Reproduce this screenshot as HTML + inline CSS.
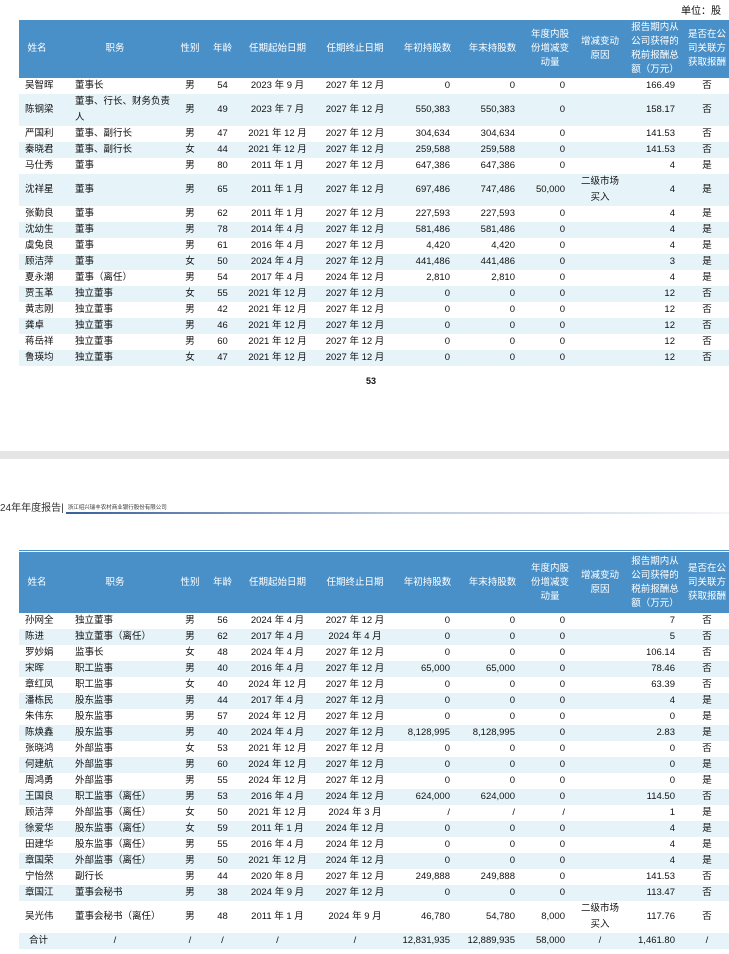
<!DOCTYPE html>
<html><head><meta charset="utf-8">
<style>
body{margin:0;width:729px;height:954px;background:#fff;overflow:hidden;position:relative;font-family:"Liberation Sans","Noto Sans CJK SC",sans-serif;color:#111;}
table{position:absolute;left:19px;width:710px;border-collapse:collapse;table-layout:fixed;font-size:9.5px;}
td,th{padding:0 3px;height:16px;line-height:14px;white-space:nowrap;}
th{background:#4a90c8;color:#fff;font-weight:normal;line-height:14px;white-space:normal;text-align:center;padding:0 2px;}
tr:nth-child(odd) td{background:#e6f3f8;}
tr:nth-child(even) td{background:#fff;}
td:nth-child(1){text-align:left;padding-left:6px}
td:nth-child(2){text-align:left;padding-left:20px}
td:nth-child(3),td:nth-child(4),td:nth-child(5),td:nth-child(6),td:nth-child(10),td:nth-child(12){text-align:center}
td:nth-child(7),td:nth-child(8),td:nth-child(9),td:nth-child(11){text-align:right;padding-right:10px}
td.w{white-space:normal;line-height:16px}
.unit{position:absolute;right:8px;top:2px;font-size:10px}
.pn{position:absolute;left:366px;top:376px;font-size:9px;font-weight:bold}
.band{position:absolute;left:0;top:451px;width:729px;height:8px;background:#e5e5e5}
.hd{position:absolute;left:0;top:502px;font-size:10px;line-height:12px;color:#333;white-space:nowrap}
.hd small{font-size:5.5px;margin-left:4px;vertical-align:2px}
.line{position:absolute;left:66px;top:512px;width:663px;height:2px;background:linear-gradient(to right,#3a5f9a,#b8c6dc,#f4f6fa)}
.tl{position:absolute;left:19px;top:550px;width:710px;height:1px;background:#4a90c8}
</style></head><body>
<div class="unit">单位：股</div>
<table style="top:20px">
<colgroup><col style="width:36px"><col style="width:120px"><col style="width:30px"><col style="width:35px"><col style="width:75px"><col style="width:80px"><col style="width:65px"><col style="width:65px"><col style="width:50px"><col style="width:50px"><col style="width:60px"><col style="width:44px"></colgroup>
<tr><th style="height:58px">姓名</th><th>职务</th><th>性别</th><th>年龄</th><th>任期起始日期</th><th>任期终止日期</th><th>年初持股数</th><th>年末持股数</th><th>年度内股份增减变动量</th><th>增减变动原因</th><th>报告期内从公司获得的税前报酬总额（万元）</th><th>是否在公司关联方获取报酬</th></tr>
<tr><td>吴智晖</td><td>董事长</td><td>男</td><td>54</td><td>2023 年 9 月</td><td>2027 年 12 月</td><td>0</td><td>0</td><td>0</td><td></td><td>166.49</td><td>否</td></tr>
<tr><td style="height:32px">陈钢梁</td><td class="w">董事、行长、财务负责人</td><td>男</td><td>49</td><td>2023 年 7 月</td><td>2027 年 12 月</td><td>550,383</td><td>550,383</td><td>0</td><td></td><td>158.17</td><td>否</td></tr>
<tr><td>严国利</td><td>董事、副行长</td><td>男</td><td>47</td><td>2021 年 12 月</td><td>2027 年 12 月</td><td>304,634</td><td>304,634</td><td>0</td><td></td><td>141.53</td><td>否</td></tr>
<tr><td>秦晓君</td><td>董事、副行长</td><td>女</td><td>44</td><td>2021 年 12 月</td><td>2027 年 12 月</td><td>259,588</td><td>259,588</td><td>0</td><td></td><td>141.53</td><td>否</td></tr>
<tr><td>马仕秀</td><td>董事</td><td>男</td><td>80</td><td>2011 年 1 月</td><td>2027 年 12 月</td><td>647,386</td><td>647,386</td><td>0</td><td></td><td>4</td><td>是</td></tr>
<tr><td style="height:32px">沈祥星</td><td>董事</td><td>男</td><td>65</td><td>2011 年 1 月</td><td>2027 年 12 月</td><td>697,486</td><td>747,486</td><td>50,000</td><td class="w">二级市场买入</td><td>4</td><td>是</td></tr>
<tr><td>张勤良</td><td>董事</td><td>男</td><td>62</td><td>2011 年 1 月</td><td>2027 年 12 月</td><td>227,593</td><td>227,593</td><td>0</td><td></td><td>4</td><td>是</td></tr>
<tr><td>沈幼生</td><td>董事</td><td>男</td><td>78</td><td>2014 年 4 月</td><td>2027 年 12 月</td><td>581,486</td><td>581,486</td><td>0</td><td></td><td>4</td><td>是</td></tr>
<tr><td>虞兔良</td><td>董事</td><td>男</td><td>61</td><td>2016 年 4 月</td><td>2027 年 12 月</td><td>4,420</td><td>4,420</td><td>0</td><td></td><td>4</td><td>是</td></tr>
<tr><td>顾洁萍</td><td>董事</td><td>女</td><td>50</td><td>2024 年 4 月</td><td>2027 年 12 月</td><td>441,486</td><td>441,486</td><td>0</td><td></td><td>3</td><td>是</td></tr>
<tr><td>夏永潮</td><td>董事（离任）</td><td>男</td><td>54</td><td>2017 年 4 月</td><td>2024 年 12 月</td><td>2,810</td><td>2,810</td><td>0</td><td></td><td>4</td><td>是</td></tr>
<tr><td>贾玉革</td><td>独立董事</td><td>女</td><td>55</td><td>2021 年 12 月</td><td>2027 年 12 月</td><td>0</td><td>0</td><td>0</td><td></td><td>12</td><td>否</td></tr>
<tr><td>黄志刚</td><td>独立董事</td><td>男</td><td>42</td><td>2021 年 12 月</td><td>2027 年 12 月</td><td>0</td><td>0</td><td>0</td><td></td><td>12</td><td>否</td></tr>
<tr><td>龚卓</td><td>独立董事</td><td>男</td><td>46</td><td>2021 年 12 月</td><td>2027 年 12 月</td><td>0</td><td>0</td><td>0</td><td></td><td>12</td><td>否</td></tr>
<tr><td>蒋岳祥</td><td>独立董事</td><td>男</td><td>60</td><td>2021 年 12 月</td><td>2027 年 12 月</td><td>0</td><td>0</td><td>0</td><td></td><td>12</td><td>否</td></tr>
<tr><td>鲁瑛均</td><td>独立董事</td><td>女</td><td>47</td><td>2021 年 12 月</td><td>2027 年 12 月</td><td>0</td><td>0</td><td>0</td><td></td><td>12</td><td>否</td></tr>
</table>
<div class="pn">53</div>
<div class="band"></div>
<div class="hd">24年年度报告|<small>浙江绍兴瑞丰农村商业银行股份有限公司</small></div>
<div class="line"></div>
<div class="tl"></div>
<table style="top:552px">
<colgroup><col style="width:36px"><col style="width:120px"><col style="width:30px"><col style="width:35px"><col style="width:75px"><col style="width:80px"><col style="width:65px"><col style="width:65px"><col style="width:50px"><col style="width:50px"><col style="width:60px"><col style="width:44px"></colgroup>
<tr><th style="height:61px">姓名</th><th>职务</th><th>性别</th><th>年龄</th><th>任期起始日期</th><th>任期终止日期</th><th>年初持股数</th><th>年末持股数</th><th>年度内股份增减变动量</th><th>增减变动原因</th><th>报告期内从公司获得的税前报酬总额（万元）</th><th>是否在公司关联方获取报酬</th></tr>
<tr><td>孙网全</td><td>独立董事</td><td>男</td><td>56</td><td>2024 年 4 月</td><td>2027 年 12 月</td><td>0</td><td>0</td><td>0</td><td></td><td>7</td><td>否</td></tr>
<tr><td>陈进</td><td>独立董事（离任）</td><td>男</td><td>62</td><td>2017 年 4 月</td><td>2024 年 4 月</td><td>0</td><td>0</td><td>0</td><td></td><td>5</td><td>否</td></tr>
<tr><td>罗妙娟</td><td>监事长</td><td>女</td><td>48</td><td>2024 年 4 月</td><td>2027 年 12 月</td><td>0</td><td>0</td><td>0</td><td></td><td>106.14</td><td>否</td></tr>
<tr><td>宋晖</td><td>职工监事</td><td>男</td><td>40</td><td>2016 年 4 月</td><td>2027 年 12 月</td><td>65,000</td><td>65,000</td><td>0</td><td></td><td>78.46</td><td>否</td></tr>
<tr><td>章红凤</td><td>职工监事</td><td>女</td><td>40</td><td>2024 年 12 月</td><td>2027 年 12 月</td><td>0</td><td>0</td><td>0</td><td></td><td>63.39</td><td>否</td></tr>
<tr><td>潘栋民</td><td>股东监事</td><td>男</td><td>44</td><td>2017 年 4 月</td><td>2027 年 12 月</td><td>0</td><td>0</td><td>0</td><td></td><td>4</td><td>是</td></tr>
<tr><td>朱伟东</td><td>股东监事</td><td>男</td><td>57</td><td>2024 年 12 月</td><td>2027 年 12 月</td><td>0</td><td>0</td><td>0</td><td></td><td>0</td><td>是</td></tr>
<tr><td>陈焕鑫</td><td>股东监事</td><td>男</td><td>40</td><td>2024 年 4 月</td><td>2027 年 12 月</td><td>8,128,995</td><td>8,128,995</td><td>0</td><td></td><td>2.83</td><td>是</td></tr>
<tr><td>张晓鸿</td><td>外部监事</td><td>女</td><td>53</td><td>2021 年 12 月</td><td>2027 年 12 月</td><td>0</td><td>0</td><td>0</td><td></td><td>0</td><td>否</td></tr>
<tr><td>何建航</td><td>外部监事</td><td>男</td><td>60</td><td>2024 年 12 月</td><td>2027 年 12 月</td><td>0</td><td>0</td><td>0</td><td></td><td>0</td><td>是</td></tr>
<tr><td>周鸿勇</td><td>外部监事</td><td>男</td><td>55</td><td>2024 年 12 月</td><td>2027 年 12 月</td><td>0</td><td>0</td><td>0</td><td></td><td>0</td><td>是</td></tr>
<tr><td>王国良</td><td>职工监事（离任）</td><td>男</td><td>53</td><td>2016 年 4 月</td><td>2024 年 12 月</td><td>624,000</td><td>624,000</td><td>0</td><td></td><td>114.50</td><td>否</td></tr>
<tr><td>顾洁萍</td><td>外部监事（离任）</td><td>女</td><td>50</td><td>2021 年 12 月</td><td>2024 年 3 月</td><td>/</td><td>/</td><td>/</td><td></td><td>1</td><td>是</td></tr>
<tr><td>徐爱华</td><td>股东监事（离任）</td><td>女</td><td>59</td><td>2011 年 1 月</td><td>2024 年 12 月</td><td>0</td><td>0</td><td>0</td><td></td><td>4</td><td>是</td></tr>
<tr><td>田建华</td><td>股东监事（离任）</td><td>男</td><td>55</td><td>2016 年 4 月</td><td>2024 年 12 月</td><td>0</td><td>0</td><td>0</td><td></td><td>4</td><td>是</td></tr>
<tr><td>章国荣</td><td>外部监事（离任）</td><td>男</td><td>50</td><td>2021 年 12 月</td><td>2024 年 12 月</td><td>0</td><td>0</td><td>0</td><td></td><td>4</td><td>是</td></tr>
<tr><td>宁怡然</td><td>副行长</td><td>男</td><td>44</td><td>2020 年 8 月</td><td>2027 年 12 月</td><td>249,888</td><td>249,888</td><td>0</td><td></td><td>141.53</td><td>否</td></tr>
<tr><td>章国江</td><td>董事会秘书</td><td>男</td><td>38</td><td>2024 年 9 月</td><td>2027 年 12 月</td><td>0</td><td>0</td><td>0</td><td></td><td>113.47</td><td>否</td></tr>
<tr><td style="height:32px">吴光伟</td><td>董事会秘书（离任）</td><td>男</td><td>48</td><td>2011 年 1 月</td><td>2024 年 9 月</td><td>46,780</td><td>54,780</td><td>8,000</td><td class="w">二级市场买入</td><td>117.76</td><td>否</td></tr>
<tr><td style="text-align:center">合计</td><td style="text-align:center;padding-left:3px">/</td><td>/</td><td>/</td><td>/</td><td>/</td><td>12,831,935</td><td>12,889,935</td><td>58,000</td><td>/</td><td>1,461.80</td><td>/</td></tr>
</table>
</body></html>
